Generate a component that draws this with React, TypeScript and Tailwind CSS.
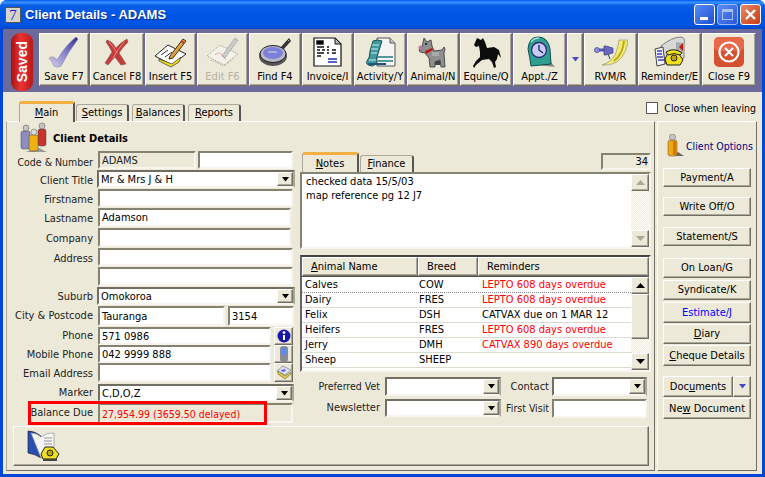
import React from "react";

const raised = "border border-t-white border-l-white border-r-[#716f64] border-b-[#716f64] shadow-[inset_-1px_-1px_0_#aca899] bg-[#ece9d8]";
const sunken = "border-2 border-t-[#85836f] border-l-[#85836f] border-r-[#f7f5ee] border-b-[#f7f5ee]";

function Tri({ c = "#000" }: { c?: string }) {
  return <svg width="9" height="5" viewBox="0 0 9 5"><path d="M1 0h7L4.5 4.5z" fill={c} /></svg>;
}

function Combo({ value, cls }: { value?: string; cls: string }) {
  return (
    <div className={`${cls} flex items-center border-2 border-t-[#716f64] border-l-[#716f64] border-r-[#aca899] border-b-[#f7f5ee] bg-white`}>
      <span className="flex-1 pl-[2px] pt-[2px] whitespace-nowrap">{value}</span>
      <span className={`${raised} w-[16px] h-full flex items-center justify-center`}><Tri /></span>
    </div>
  );
}

function Field({ value, cls }: { value?: string; cls: string }) {
  return <div className={`${cls} ${sunken} bg-white pl-[2px] pt-[1px] flex items-center whitespace-nowrap`}>{value}</div>;
}

function Label({ children, cls = "w-[86px] pt-[4px]" }: { children?: React.ReactNode; cls?: string }) {
  return <div className={`${cls} text-right whitespace-nowrap text-[#222]`}>{children}</div>;
}

const I = {
  save: (
    <svg width="32" height="32" viewBox="0 0 32 32">
      <defs><linearGradient id="s" x1="0" y1="1" x2="1" y2="0"><stop offset="0" stopColor="#d5d2ea" /><stop offset=".5" stopColor="#8a85cf" /><stop offset="1" stopColor="#2e2a90" /></linearGradient></defs>
      <path d="M1 22 Q5 19 9 24 Q17 10 28 1 L30 3 Q20 16 13 30 Q9 32 6 30 Q4 25 1 22z" fill="url(#s)" stroke="#77749a" strokeWidth=".5" />
    </svg>
  ),
  cancel: (
    <svg width="26" height="28" viewBox="0 0 26 28">
      <path d="M3 2 Q8 3 12 10 Q17 4 23 1 L24 4 Q18 10 15 15 Q19 21 22 26 L17 27 Q13 22 11 19 Q7 23 4 27 L1 25 Q5 19 8 14 Q5 8 2 4z" fill="#c8393a" stroke="#7c5a5a" strokeWidth=".6" />
      <path d="M5 4 Q10 9 13 15 M20 4 Q14 11 9 20" stroke="#e88a80" fill="none" />
    </svg>
  ),
  insert: (
    <svg width="34" height="32" viewBox="0 0 34 32">
      <path d="M1 20 14 9l18 9-14 11z" fill="#fff" stroke="#222" />
      <path d="M5 23 18 28l9-7-2 5-8 5L5 25z" fill="#f0e020" stroke="#333" strokeWidth=".7" />
      <path d="M7 19 14 14M11 21 18 16M15 23 21 19" stroke="#333" />
      <path d="M16 20 29 3l3 2-13 17-4 1z" fill="#e8a030" stroke="#333" />
      <path d="M27 5l3 2" stroke="#c03030" strokeWidth="2" />
    </svg>
  ),
  edit: (
    <svg width="34" height="32" viewBox="0 0 34 32">
      <path d="M1 20 14 9l18 9-14 11z" fill="#f4f2e8" stroke="#999" strokeDasharray="1 1" />
      <path d="M5 24 18 30l9-7" fill="none" stroke="#aaa" strokeDasharray="1 1" />
      <path d="M16 20 29 2l3 2-13 18z" fill="#ccc" stroke="#888" strokeDasharray="1 1" />
      <path d="M9 19q4-4 7 0t4 4" stroke="#d08a8a" fill="none" strokeDasharray="2 1" />
    </svg>
  ),
  find: (
    <svg width="34" height="32" viewBox="0 0 34 32">
      <path d="M22 12 31 2l2 3-8 9z" fill="#333" />
      <path d="M29 3l2 2" stroke="#bbb" />
      <ellipse cx="15" cy="20" rx="14" ry="10" fill="#555" />
      <ellipse cx="15" cy="18" rx="13" ry="8.5" fill="#b8b8c8" stroke="#222" />
      <ellipse cx="15" cy="17" rx="10" ry="6" fill="#7c80d8" />
      <path d="M10 16h9" stroke="#dde" />
    </svg>
  ),
  invoice: (
    <svg width="29" height="30" viewBox="0 0 29 30">
      <path d="M1 1h21l6 6v22H1z" fill="#fff" stroke="#111" strokeWidth="1.2" />
      <path d="M22 1v6h6z" fill="#bbb" stroke="#111" />
      <path d="M4 4h6v3H4zM4 10h7M14 10h2M4 13h3M9 13h3M14 13h2M19 13h4M4 16h7M14 16h2M19 16h4M4 19h4" stroke="#111" strokeWidth="1.5" />
      <path d="M15 22h9M15 25h9" stroke="#2030b0" strokeWidth="1.5" />
    </svg>
  ),
  activity: (
    <svg width="32" height="32" viewBox="0 0 32 32">
      <path d="M13 2h13l5 5v23H13z" fill="#f4f4f4" stroke="#555" />
      <path d="M26 2v5h5" fill="#ccc" stroke="#555" />
      <path d="M9 5 Q14 3 18 5 L12 24 Q14 28 8 30 Q1 29 3 25 Q6 22 6 15z" fill="#3f9aa0" stroke="#1c4f55" />
      <path d="M8 9h7M7 13h7M7 17h6M5 24h7" stroke="#cfeef0" />
      <path d="M14 21h15M14 25h15" stroke="#1e7a80" strokeWidth="1.5" />
      <path d="M4 28h18" stroke="#22537a" strokeWidth="2" />
    </svg>
  ),
  animal: (
    <svg width="30" height="32" viewBox="0 0 30 32">
      <path d="M6 2l3 4 4-2 1 6 2 5 8-1 2-3 1 2-1 4 1 14h-4l-1-7-5 2v5h-5l-1-9-4-5-5-1-1-3 3-2z" fill="#8f8f8f" stroke="#333" strokeWidth=".8" />
      <circle cx="2.5" cy="11.5" r="2" fill="#c070b0" />
      <path d="M7 15l7-3 1 2-7 4z" fill="#c01818" />
      <circle cx="8" cy="8" r="1" fill="#111" />
      <path d="M14 16h7v4h-7z" fill="#aaa" />
      <path d="M17 25h5v4h-5z" fill="#444" />
    </svg>
  ),
  equine: (
    <svg width="30" height="32" viewBox="0 0 30 32">
      <path d="M6 2l4 2 2-2 2 4 2 6 7-1 5 3 2 8-3-4-1 5-2 3 1 5-2 1-2-6-3-3-7 1-6 5-2 3-1-2 3-5 4-4v-5L8 10 5 11 3 9z" fill="#0c0c0c" />
    </svg>
  ),
  appt: (
    <svg width="30" height="32" viewBox="0 0 30 32">
      <path d="M4 28 L30 31 L25 25z" fill="#888" />
      <path d="M3 13 Q4 1 13 1 Q23 1 25 13 L26 28 L6 30 Q5 22 3 13z" fill="#2f9f92" stroke="#0e4f4a" />
      <path d="M6 6Q9 2 14 2" stroke="#9fe0d8" fill="none" strokeWidth="1.5" />
      <circle cx="14" cy="14" r="7.5" fill="#c8ccf4" stroke="#2d2d7a" strokeWidth="1.4" />
      <path d="M14 9v5l4 3" stroke="#1a1a60" fill="none" strokeWidth="1.3" />
    </svg>
  ),
  rvm: (
    <svg width="34" height="28" viewBox="0 0 34 28">
      <path d="M25 2h9q-1 14-11 22-7 4-15 3 9-3 13-10 3-7 4-15z" fill="#f0ea70" stroke="#777" strokeWidth=".5" />
      <path d="M30 3q-1 13-10 20" stroke="#c0a820" fill="none" strokeWidth="2" />
      <path d="M2 12h8" stroke="#5a5ab0" strokeWidth="3" />
      <circle cx="3" cy="12" r="2.6" fill="#8a8ad8" stroke="#44448a" strokeWidth=".6" />
      <path d="M10 8h2l7 2v5l-7 2h-2z" fill="#6868c0" stroke="#33336a" strokeWidth=".6" />
      <path d="M14 16l2 5" stroke="#444" />
    </svg>
  ),
  reminder: (
    <svg width="32" height="32" viewBox="0 0 32 32">
      <path d="M7 10 Q18 1 27 1 Q32 2 30 8 L30 22 L12 28z" fill="#d8d8d8" stroke="#555" strokeWidth=".7" />
      <path d="M22 6l7 1v10l-7 2z" fill="#aaa" />
      <path d="M25 11l4-4v8z" fill="#c01818" />
      <path d="M1 13l8-2 2 17-8 2z" fill="#f2f2f2" stroke="#444" />
      <path d="M3 15h5M3 18h5M3 21h6M4 24h6" stroke="#4040c0" strokeWidth="1.4" />
      <path d="M11 23 15 15h8l6 9-3 5H13z" fill="#f0e020" stroke="#222" />
      <path d="M12 16q8-5 16 1l-2 2q-6-3-12 0z" fill="#f0e020" stroke="#222" />
      <circle cx="20" cy="22" r="3" fill="#bba810" stroke="#222" />
    </svg>
  ),
  close: (
    <svg width="30" height="30" viewBox="0 0 30 30">
      <rect x="0" y="0" width="30" height="30" rx="5" fill="#d5502e" />
      <rect x="0" y="0" width="30" height="14" rx="5" fill="#e8694a" />
      <circle cx="15" cy="15" r="9.5" fill="none" stroke="#fff" strokeWidth="2.2" />
      <path d="M11 11l8 8M19 11l-8 8" stroke="#fff" strokeWidth="2.2" />
    </svg>
  ),
};

const tools = [
  { w: "w-[50px]", icon: I.save, label: "Save F7" },
  { w: "w-[54px]", icon: I.cancel, label: "Cancel F8" },
  { w: "w-[51px]", icon: I.insert, label: "Insert F5" },
  { w: "w-[51px]", icon: I.edit, label: "Edit F6", dim: true },
  { w: "w-[52px]", icon: I.find, label: "Find F4" },
  { w: "w-[51px]", icon: I.invoice, label: "Invoice/I" },
  { w: "w-[52px]", icon: I.activity, label: "Activity/Y" },
  { w: "w-[52px]", icon: I.animal, label: "Animal/N" },
  { w: "w-[52px]", icon: I.equine, label: "Equine/Q" },
  { w: "w-[53px]", icon: I.appt, label: "Appt./Z" },
];
const tools2 = [
  { w: "w-[53px]", icon: I.rvm, label: "RVM/R" },
  { w: "w-[63px]", icon: I.reminder, label: "Reminder/E" },
  { w: "w-[54px]", icon: I.close, label: "Close F9" },
];

function Tool({ t }: { t: { w: string; icon: React.ReactNode; label: string; dim?: boolean } }) {
  return (
    <div className={`${t.w} h-[53px] ${raised} flex flex-col items-center shrink-0`}>
      <div className="h-[36px] flex items-center justify-center">{t.icon}</div>
      <div className={`whitespace-nowrap leading-[13px] ${t.dim ? "text-[#b5b2a5]" : ""}`}>{t.label}</div>
    </div>
  );
}

function Tab({ children, cls, active }: { children: React.ReactNode; cls: string; active?: boolean }) {
  return (
    <div className={`${cls} flex items-center justify-center rounded-t-[3px] bg-[#ece9d8] border-l border-t border-[#aca899] border-r-2 border-r-[#555] ${active ? "border-t-[3px] border-t-[#f5b043] relative z-10" : ""}`}>
      {children}
    </div>
  );
}

const animals = [
  ["Calves", "COW", "LEPTO 608 days overdue", true],
  ["Dairy", "FRES", "LEPTO 608 days overdue", true],
  ["Felix", "DSH", "CATVAX due on 1 MAR 12", false],
  ["Heifers", "FRES", "LEPTO 608 days overdue", true],
  ["Jerry", "DMH", "CATVAX 890 days overdue", true],
  ["Sheep", "SHEEP", "", false],
  ["Tom", "HUN", "DOGVAX 878 days overdue", true],
] as const;

const side = [
  { c: "mt-0 h-[19px]", l: <>Payment/A</> },
  { c: "mt-[10px] h-[19px]", l: <>Write Off/O</> },
  { c: "mt-[11px] h-[19px]", l: <>Statement/S</> },
  { c: "mt-[12px] h-[20px]", l: <>On Loan/G</> },
  { c: "mt-[2px] h-[20px]", l: <>Syndicate/K</> },
  { c: "mt-[2px] h-[21px] text-[#0000ff]", l: <>Estimate/J</> },
  { c: "mt-[1px] h-[20px]", l: <><u>D</u>iary</> },
  { c: "mt-[1px] h-[21px]", l: <><u>C</u>heque Details</> },
];

function ScrollBtn({ up, dim, cls = "h-[17px]" }: { up?: boolean; dim?: boolean; cls?: string }) {
  return (
    <div className={`${raised} ${cls} w-full flex items-center justify-center shrink-0`}>
      <svg width="9" height="5" viewBox="0 0 9 5" className={up ? "rotate-180" : ""}><path d="M0 0h9L4.5 5z" fill={dim ? "#aca899" : "#000"} /></svg>
    </div>
  );
}

const dither = "bg-[repeating-conic-gradient(#ece9d8_0_25%,#ffffff_0_50%)] bg-[length:2px_2px]";

export default function App() {
  return (
    <div className="w-[765px] h-[477px] overflow-hidden flex flex-col rounded-t-[7px] bg-[#0347d6] text-[11px] leading-[14px] text-black font-['DejaVu_Sans_Condensed','Liberation_Sans',sans-serif]">
      {/* title bar */}
      <div className="h-[29px] shrink-0 flex items-center pl-[5px] pr-[4px] bg-[linear-gradient(180deg,#0058ee_0%,#3a93ff_8%,#0a5fe8_18%,#0055e5_50%,#0054e3_85%,#0348c8_100%)]">
        <div className="w-[16px] h-[16px] bg-[#d8d4c8] border border-[#555] text-[#1818d0] text-[15px] leading-[14px] text-center font-['Liberation_Serif',serif] mr-[4px]">7</div>
        <div className="flex-1 text-white font-bold text-[13px] font-['Liberation_Sans',sans-serif] [text-shadow:1px_1px_0_#0a2f8a]">Client Details - ADAMS</div>
        <div className="flex gap-[2px]">
          <div className="w-[21px] h-[21px] rounded-[3px] border border-white bg-[linear-gradient(135deg,#5a8cf5,#1e4fd0)] flex items-end pl-[5px] pb-[4px]"><div className="w-[8px] h-[3px] bg-white" /></div>
          <div className="w-[21px] h-[21px] rounded-[3px] border border-[#9db8f0] bg-[linear-gradient(135deg,#5a8cf5,#2a58d4)] flex items-center justify-center"><div className="w-[11px] h-[11px] border border-[#a8c0f0] border-t-[3px]" /></div>
          <div className="w-[21px] h-[21px] rounded-[3px] border border-white bg-[linear-gradient(135deg,#e8896a,#c93a12)] flex items-center justify-center">
            <svg width="13" height="13" viewBox="0 0 13 13"><path d="M2 2l9 9M11 2l-9 9" stroke="#fff" strokeWidth="2.4" /></svg>
          </div>
        </div>
      </div>

      <div className="mx-[3px] h-[445px] bg-[#ece9d8] flex flex-col shrink-0">
        {/* toolbar */}
        <div className="h-[63px] shrink-0 bg-[#6b6a9b] flex pl-[8px] pt-[4px]">
          <div className="w-[22px] h-[58px] rounded-[9px] bg-[linear-gradient(90deg,#a81010,#ec3434_45%,#b81818)] flex items-center justify-center mr-[6px] shrink-0">
            <span className="[writing-mode:vertical-rl] rotate-180 text-white font-bold text-[14px] font-['Liberation_Sans',sans-serif]">Saved</span>
          </div>
          <div className="flex gap-[1px]">
            {tools.map((t) => <Tool key={t.label} t={t} />)}
            <div className={`w-[16px] h-[53px] ${raised} flex items-center justify-center shrink-0`}><Tri c="#4a4ac0" /></div>
            {tools2.map((t) => <Tool key={t.label} t={t} />)}
          </div>
        </div>

        {/* tabs row */}
        <div className="h-[29px] shrink-0 flex items-end pl-[16px] relative">
          <Tab cls="w-[56px] h-[21px] -mb-[1px]" active><span><u>M</u>ain</span></Tab>
          <Tab cls="w-[53px] h-[17px] ml-[1px]"><span><u>S</u>ettings</span></Tab>
          <Tab cls="w-[53px] h-[17px] ml-[3px]"><span><u>B</u>alances</span></Tab>
          <Tab cls="w-[53px] h-[17px] ml-[3px]"><span><u>R</u>eports</span></Tab>
          <div className="flex-1" />
          <div className="flex items-center self-start mt-[9px] mr-[6px]">
            <div className="w-[12px] h-[12px] bg-white border border-[#555] mr-[6px]" />
            <span className="whitespace-nowrap text-[10.5px]">Close when leaving</span>
          </div>
        </div>

        {/* content */}
        <div className="h-[350px] flex shrink-0 pl-[3px]">
          {/* main panel */}
          <div className="w-[649px] h-full border border-t-white border-l-[#aca899] border-r-[#716f64] border-b-[#716f64] flex flex-col">
            <div className="h-[304px] flex shrink-0">
              {/* left form */}
              <div className="w-[293px] shrink-0 flex flex-col">
                <div className="h-[29px] pl-[12px] flex items-start">
                  <svg width="31" height="31" viewBox="0 0 31 31" className="shrink-0">
                    <path d="M6 30 28 30 20 26z" fill="#999" />
                    <rect x="19" y="7" width="8" height="17" rx="2" fill="#c8332b" stroke="#444" strokeWidth=".5" />
                    <circle cx="23" cy="4" r="3" fill="#c4c4c4" stroke="#555" strokeWidth=".5" />
                    <rect x="2" y="9" width="9" height="18" rx="2" fill="#8d8dc0" stroke="#444" strokeWidth=".5" />
                    <circle cx="7" cy="6" r="3" fill="#c4c4c4" stroke="#555" strokeWidth=".5" />
                    <rect x="10" y="13" width="9" height="16" rx="2" fill="#f0b010" stroke="#444" strokeWidth=".5" />
                    <circle cx="15" cy="10" r="3" fill="#d8d8d8" stroke="#555" strokeWidth=".5" />
                  </svg>
                  <span className="font-bold ml-[3px] mt-[10px]">Client Details</span>
                </div>
                <div className="h-[19px] flex gap-[5px]"><Label cls="w-[86px] pt-[4px] text-[10.5px]">Code &amp; Number</Label><div className={`w-[98px] h-[18px] ${sunken} pl-[2px] pt-[1px] flex items-center text-[#222]`}>ADAMS</div><Field cls="-ml-[3px] w-[95px] h-[18px]" /></div>
                <div className="h-[19px] flex gap-[4px]"><Label>Client Title</Label><Combo cls="ml-[0px] w-[198px] h-[18px]" value="Mr & Mrs J & H" /></div>
                <div className="h-[19px] flex gap-[5px]"><Label>Firstname</Label><Field cls="w-[195px] h-[18px]" /></div>
                <div className="h-[20px] flex gap-[5px]"><Label>Lastname</Label><Field cls="w-[193px] h-[19px]" value="Adamson" /></div>
                <div className="h-[20px] flex gap-[5px]"><Label>Company</Label><Field cls="w-[193px] h-[19px]" /></div>
                <div className="h-[19px] flex gap-[5px]"><Label>Address</Label><Field cls="w-[195px] h-[18px]" /></div>
                <div className="h-[20px] flex gap-[5px]"><Label /><Field cls="w-[195px] h-[19px]" /></div>
                <div className="h-[19px] flex gap-[4px]"><Label cls="w-[86px] pt-[3px]">Suburb</Label><Combo cls="w-[198px] h-[18px]" value="Omokoroa" /></div>
                <div className="h-[21px] flex gap-[5px]"><Label cls="w-[86px] pt-[3px]">City &amp; Postcode</Label><Field cls="w-[127px] h-[20px]" value="Tauranga" /><Field cls="-ml-[2px] w-[66px] h-[20px]" value="3154" /></div>
                <div className="h-[18px] flex gap-[5px]"><Label cls="w-[86px] pt-[2px]">Phone</Label><Field cls="w-[173px] h-[18px]" value="571 0986" />
                  <div className={`${raised} -ml-[2px] w-[19px] h-[18px] flex items-center justify-center`}>
                    <svg width="14" height="14" viewBox="0 0 14 14"><circle cx="7" cy="7" r="6.5" fill="#1818a8" /><circle cx="7" cy="3.6" r="1.4" fill="#fff" /><path d="M6 6h2v5H6z" fill="#fff" /></svg>
                  </div>
                </div>
                <div className="h-[18px] flex gap-[5px]"><Label cls="w-[86px] pt-[3px]">Mobile Phone</Label><Field cls="w-[173px] h-[18px]" value="042 9999 888" />
                  <div className={`${raised} -ml-[2px] w-[19px] h-[18px] flex items-center justify-center`}>
                    <svg width="10" height="16" viewBox="0 0 10 16"><rect x="1" y="0" width="8" height="16" rx="3" fill="#8a8a92" /><rect x="2.5" y="2" width="5" height="7" rx="1" fill="#5a8cf0" /></svg>
                  </div>
                </div>
                <div className="h-[21px] flex gap-[5px]"><Label>Email Address</Label><Field cls="w-[173px] h-[19px]" />
                  <div className={`${raised} -ml-[2px] w-[19px] h-[19px] flex items-center justify-center`}>
                    <svg width="16" height="15" viewBox="0 0 16 15"><path d="M1 6 7 1l8 4-6 5z" fill="#dfe2f4" stroke="#555" strokeWidth=".5" /><path d="M5 5l4-1 1 2-4 1z" fill="#5a6ae0" /><path d="M2 9l7 5 6-5v-2l-6 4-7-5z" fill="#e0d040" stroke="#444" strokeWidth=".5" /></svg>
                  </div>
                </div>
                <div className="h-[19px] flex gap-[5px]"><Label cls="w-[86px] pt-[2px]">Marker</Label><Combo cls="w-[196px] h-[18px]" value="C,D,O,Z" /></div>
                <div className="h-[23px] flex gap-[5px] relative">
                  <Label cls="w-[86px] pt-[3px]">Balance Due</Label>
                  <div className={`w-[195px] h-[20px] ${sunken} pl-[2px] pt-[1px] flex items-center whitespace-nowrap text-[#ff0000] text-[10.5px]`}>27,954.99 (3659.50 delayed)</div>
                  <div className="absolute left-[21px] -top-[2px] w-[239px] h-[24px] border-[3px] border-[#ff0000]" />
                </div>
              </div>

              {/* right column */}
              <div className="w-[351px] shrink-0 pt-[30px] flex flex-col">
                <div className="h-[20px] flex items-end pl-[2px]">
                  <Tab cls="w-[57px] h-[20px]" active><span><u>N</u>otes</span></Tab>
                  <Tab cls="w-[54px] h-[17px] ml-[1px]"><span><u>F</u>inance</span></Tab>
                  <div className="flex-1" />
                  <div className={`w-[50px] h-[17px] mb-[2px] ${sunken} flex items-center justify-end pr-[1px]`}>34</div>
                </div>
                <div className="h-[77px] border-2 border-t-[#85836f] border-l-[#85836f] border-r-[#f7f5ee] border-b-[#f7f5ee] bg-white flex">
                  <div className="flex-1 pl-[4px] pt-[1px]">checked data 15/5/03<br />map reference pg 12 J7</div>
                  <div className="w-[18px] flex flex-col">
                    <ScrollBtn up dim />
                    <div className={`flex-1 ${dither}`} />
                    <ScrollBtn dim />
                  </div>
                </div>
                <div className="mt-[6px] w-[351px] h-[117px] border-2 border-t-[#444] border-l-[#666] border-r-[#f7f5ee] border-b-[#f7f5ee] flex flex-col">
                  <div className="h-[20px] flex shrink-0 border-b border-[#555]">
                    <div className={`${raised} w-[116px] pl-[8px] flex items-center`}><span><u>A</u>nimal Name</span></div>
                    <div className={`${raised} w-[60px] pl-[8px] flex items-center`}>Breed</div>
                    <div className={`${raised} flex-1 pl-[8px] flex items-center`}>Reminders</div>
                  </div>
                  <div className="flex-1 flex min-h-0 bg-white">
                    <div className="flex-1 overflow-hidden pt-[1px]">
                      {animals.map((a, i) => (
                        <div key={a[0]} className={`h-[15px] flex items-center border-b border-[#dddbd0] ${i === 0 ? "border-dotted border-b-[#888]" : ""}`}>
                          <div className="w-[117px] pl-[3px] shrink-0">{a[0]}</div>
                          <div className="w-[63px] shrink-0">{a[1]}</div>
                          <div className={`whitespace-nowrap ${a[3] ? "text-[#ff0000]" : ""}`}>{a[2]}</div>
                        </div>
                      ))}
                    </div>
                    <div className="w-[18px] shrink-0 flex flex-col">
                      <ScrollBtn up />
                      <div className={`${raised} h-[45px] shrink-0`} />
                      <div className={`flex-1 ${dither}`} />
                      <ScrollBtn />
                    </div>
                  </div>
                </div>
                <div className="mt-[5px] h-[22px] flex">
                  <Label cls="w-[80px] pt-[2px] text-[10.5px]">Preferred Vet</Label>
                  <Combo cls="ml-[5px] w-[116px] h-[19px]" />
                  <Label cls="w-[48px] pt-[3px]">Contact</Label>
                  <Combo cls="ml-[3px] w-[95px] h-[19px]" />
                </div>
                <div className="h-[20px] flex">
                  <Label cls="w-[80px] pt-[2px]">Newsletter</Label>
                  <Combo cls="ml-[5px] w-[116px] h-[18px]" />
                  <Label cls="w-[48px] pt-[2px] text-[10.5px]">First Visit</Label>
                  <Field cls="ml-[3px] w-[95px] h-[19px]" />
                </div>
              </div>
            </div>
            {/* bottom panel */}
            <div className={`ml-[6px] w-[636px] h-[40px] shrink-0 ${raised} pl-[13px] pt-[3px]`}>
              <svg width="34" height="32" viewBox="0 0 34 32">
                <path d="M1 1 Q8 1 14 6 V28 Q8 24 1 23z" fill="#2a4fb0" stroke="#112" strokeWidth=".6" />
                <path d="M4 3 Q10 3 14 7 Q20 2 27 3 V18 L14 28z" fill="#f4f4f4" stroke="#888" strokeWidth=".6" />
                <path d="M17 8h8M17 11h8M17 14h8" stroke="#999" />
                <path d="M14 24 18 17h8l6 7-3 5H16z" fill="#f0e020" stroke="#222" />
                <circle cx="23" cy="23" r="3" fill="#bba810" stroke="#222" />
                <path d="M16 29h14v2H16z" fill="#444" />
              </svg>
            </div>
          </div>

          {/* right panel */}
          <div className="ml-[2px] w-[100px] h-full border border-t-white border-l-white border-r-[#716f64] border-b-[#716f64] pl-[5px] flex flex-col">
            <div className="h-[46px] pt-[12px] flex items-start shrink-0">
              <svg width="20" height="23" viewBox="0 0 20 23" className="ml-[3px] shrink-0">
                <path d="M6 22 18 22 12 18z" fill="#666" />
                <rect x="2" y="6" width="9" height="16" rx="2" fill="#f0a810" stroke="#555" strokeWidth=".5" />
                <path d="M7 7h3v14H7z" fill="#d87808" />
                <circle cx="6.5" cy="3" r="3" fill="#c8c8c8" stroke="#555" strokeWidth=".5" />
              </svg>
              <span className="text-[#000080] whitespace-nowrap mt-[5px] text-[10.5px]">Client Options</span>
            </div>
            {side.map((s, i) => (
              <div key={i} className={`${s.c} w-[88px] ${raised} flex items-center justify-center whitespace-nowrap shrink-0`}>{s.l}</div>
            ))}
            <div className="mt-[10px] h-[21px] w-[88px] flex shrink-0">
              <div className={`${raised} flex-1 flex items-center justify-center`}><span>Doc<u>u</u>ments</span></div>
              <div className={`${raised} w-[18px] flex items-center justify-center`}><Tri c="#4a4ac0" /></div>
            </div>
            <div className={`mt-[1px] h-[21px] w-[88px] ${raised} flex items-center justify-center whitespace-nowrap shrink-0`}><span>Ne<u>w</u> Document</span></div>
          </div>
        </div>
      </div>
    </div>
  );
}
